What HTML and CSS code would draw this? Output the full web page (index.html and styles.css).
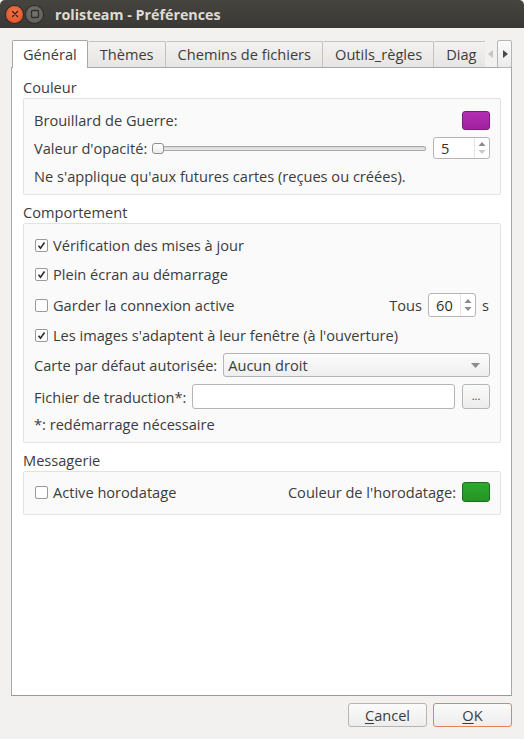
FILE: index.html
```html
<!DOCTYPE html>
<html lang="fr">
<head>
<meta charset="utf-8">
<title>rolisteam - Préférences</title>
<link rel="stylesheet" href="styles.css">
</head>
<body>
<div class="window">
  <div class="titlebar">
    <span class="wbtn close"><svg width="16" height="16" viewBox="0 0 16 16"><path d="M5.5 5.5l5 5M10.5 5.5l-5 5" stroke="#3a1a10" stroke-width="1.3" stroke-linecap="round"/></svg></span>
    <span class="wbtn mini"><svg width="16" height="16" viewBox="0 0 16 16"><rect x="4.5" y="4.5" width="7" height="7" rx="1" fill="none" stroke="#2e2d2a" stroke-width="1.3"/></svg></span>
    <span class="title">rolisteam - Préférences</span>
  </div>
  <div class="content">
    <div class="tabwidget">
      <div class="tabbar">
        <div class="tabs">
          <div class="tab active">Général</div>
          <div class="tab">Thèmes</div>
          <div class="tab">Chemins de fichiers</div>
          <div class="tab">Outils_règles</div>
          <div class="tab last">Diag</div>
        </div>
        <div class="scroll">
          <span class="sarrow left"><svg width="6" height="8" viewBox="0 0 6 8"><path d="M5 0L0 4l5 4z" fill="#c4c4c4"/></svg></span>
          <span class="sarrow right"><svg width="6" height="8" viewBox="0 0 6 8"><path d="M1 0l5 4-5 4z" fill="#4a4a4a"/></svg></span>
        </div>
      </div>
      <div class="pane">
        <div class="glabel">Couleur</div>
        <div class="group g1">
          <div class="row between">
            <span>Brouillard de Guerre:</span>
            <span class="swatch purple"></span>
          </div>
          <div class="row">
            <span>Valeur d'opacité:</span>
            <div class="slider"><span class="handle"></span><span class="groove"></span></div>
            <div class="spin s1"><span class="val">5</span><span class="arrows"><svg width="8" height="18" viewBox="0 0 8 18"><path d="M4 3l3.5 4h-7z" fill="#8a8a8a"/><path d="M4 15l3.5-4h-7z" fill="#c8c8c8"/></svg></span></div>
          </div>
          <div class="row">
            <span>Ne s'applique qu'aux futures cartes (reçues ou créées).</span>
          </div>
        </div>

        <div class="glabel">Comportement</div>
        <div class="group g2">
          <div class="row r1"><span class="check on"><svg width="9" height="9" viewBox="0 0 9 9"><path d="M1.5 4.8l2 2.4L7.5 1.5" fill="none" stroke="#2b2b2b" stroke-width="1.6"/></svg></span><span>Vérification des mises à jour</span></div>
          <div class="row r2"><span class="check on"><svg width="9" height="9" viewBox="0 0 9 9"><path d="M1.5 4.8l2 2.4L7.5 1.5" fill="none" stroke="#2b2b2b" stroke-width="1.6"/></svg></span><span>Plein écran au démarrage</span></div>
          <div class="row r3">
            <span class="check"></span><span class="grow">Garder la connexion active</span>
            <span class="tous">Tous</span>
            <div class="spin s2"><span class="val">60</span><span class="arrows"><svg width="8" height="20" viewBox="0 0 8 20"><path d="M4 4l3.5 4h-7z" fill="#8a8a8a"/><path d="M4 16l3.5-4h-7z" fill="#8a8a8a"/></svg></span></div>
            <span class="unit">s</span>
          </div>
          <div class="row r4"><span class="check on"><svg width="9" height="9" viewBox="0 0 9 9"><path d="M1.5 4.8l2 2.4L7.5 1.5" fill="none" stroke="#2b2b2b" stroke-width="1.6"/></svg></span><span>Les images s'adaptent à leur fenêtre (à l'ouverture)</span></div>
          <div class="row r5">
            <span>Carte par défaut autorisée:</span>
            <div class="combo"><span>Aucun droit</span><svg width="9" height="5" viewBox="0 0 9 5"><path d="M0 0h9L4.5 5z" fill="#8c8c8c"/></svg></div>
          </div>
          <div class="row r6">
            <span>Fichier de traduction*:</span>
            <div class="lineedit"></div>
            <div class="tbtn">...</div>
          </div>
          <div class="row r7"><span>*: redémarrage nécessaire</span></div>
        </div>

        <div class="glabel">Messagerie</div>
        <div class="group g3">
          <div class="row">
            <span class="check"></span><span class="grow">Active horodatage</span>
            <span class="clabel">Couleur de l'horodatage:</span>
            <span class="swatch green"></span>
          </div>
        </div>
      </div>
    </div>
    <div class="buttons">
      <div class="btn"><u>C</u>ancel</div>
      <div class="btn ok"><u>O</u>K</div>
    </div>
  </div>
</div>
</body>
</html>
```

FILE: styles.css
```css
* { box-sizing: border-box; }
html, body { margin: 0; padding: 0; }
body {
  width: 524px;
  height: 739px;
  background: #f2f1f0;
  font-family: "Open Sans", "DejaVu Sans", sans-serif;
  font-size: 14.6px;
  color: #3c3c3c;
  overflow: hidden;
}
.window { width: 524px; height: 739px; display: flex; flex-direction: column; }

.titlebar {
  height: 28px;
  background: linear-gradient(#45443f, #3a3935);
  display: flex;
  align-items: center;
  padding-left: 6px;
  border-radius: 5px 5px 0 0;
}
.wbtn {
  width: 17px; height: 17px; border-radius: 50%;
  display: flex; align-items: center; justify-content: center;
  margin-right: 3px;
}
.wbtn svg { display: block; }
.close { background: radial-gradient(circle at 50% 40%, #f5774a, #dc4a1e); box-shadow: 0 0 0 1px #2c2b28; }
.mini { background: radial-gradient(circle at 50% 40%, #76746d, #5b5a55); box-shadow: 0 0 0 1px #2c2b28; }
.title {
  margin-left: 9px;
  color: #dfdbd2;
  font-weight: bold;
  font-size: 14.3px;
}

.content { flex: 1; display: flex; flex-direction: column; padding: 12px 12px 0 11px; }

.tabwidget { display: flex; flex-direction: column; }
.tabbar { height: 27px; display: flex; align-items: flex-end; position: relative; z-index: 1; }
.tabs { width: 474px; display: flex; align-items: flex-end; overflow: hidden; height: 28px; margin-bottom: -1px; }
.tab {
  flex: none;
  height: 26px;
  padding: 0 11px 1px 12px;
  border: 1px solid #c2c2c2;
  border-bottom: none;
  border-left: none;
  background: linear-gradient(#f3f2f1, #e6e5e3);
  display: flex; align-items: center;
  white-space: nowrap;
  border-radius: 2px 2px 0 0;
  margin-bottom: 1px;
}
.tab.last { flex: 1; border-right: none; padding-right: 0; border-radius: 2px 0 0 0; }
.tab.active {
  height: 28px;
  margin-bottom: 0;
  background: #ffffff;
  border: 1px solid #a8a8a8;
  border-bottom: none;
  padding: 0 10px 1px 10px;
  margin-left: 1px;
}
.scroll { display: flex; height: 28px; align-items: stretch; margin-bottom: -1px; }
.sarrow { display: flex; align-items: center; justify-content: center; }
.sarrow.left { width: 12px; }
.sarrow.right { width: 15px; border: 1px solid #b5b5b5; background: linear-gradient(#fbfbfb, #ebebeb); border-radius: 2px; }

.pane {
  height: 629px;
  background: #ffffff;
  border: 1px solid #a8a8a8;
  border-bottom-color: #9a9a9a;
  padding: 10px 10px 0 11px;
  display: flex; flex-direction: column;
}
.glabel { height: 18px; line-height: 18px; margin-bottom: 2px; }
.group {
  background: #fafafa;
  border: 1px solid #e2e2e2;
  border-radius: 2px;
  padding: 10px 10px 7px 10px;
  margin-bottom: 8px;
  display: flex; flex-direction: column;
}
.g1 .row + .row { margin-top: 6px; }
.row { display: flex; align-items: center; height: 22px; white-space: nowrap; }
.between { justify-content: space-between; }
.grow { flex: 1; }

.swatch { width: 28px; height: 19px; border-radius: 3px; flex: none; }
.purple { background: linear-gradient(#b32db3, #a0229f); border: 1px solid #7a1a7a; }
.green { background: linear-gradient(#2ea82e, #249524); border: 1px solid #1b6e1b; height: 20px; }
.clabel { margin-right: 6px; }

.slider { flex: 1; display: flex; align-items: center; margin-left: 5px; margin-right: 7px; height: 12px; }
.handle { width: 12px; height: 11px; border: 1px solid #8e8e8e; border-radius: 3px; background: linear-gradient(#ffffff, #ececec); flex: none; }
.groove { flex: 1; height: 5px; border: 1px solid #a8a8a8; border-left: none; border-radius: 0 3px 3px 0; background: linear-gradient(#d6d6d6, #ececec); }

.spin {
  height: 22px;
  border: 1px solid #b5b5b5;
  border-radius: 3px;
  background: #fff;
  display: flex; align-items: center;
  flex: none;
}
.spin .val { flex: 1; padding-left: 7px; color: #2e2e2e; }
.spin .arrows { width: 15px; height: 100%; display: flex; align-items: center; justify-content: center; border-left: 1px solid #e6e6e6; }
.s1 { width: 57px; }
.s2 { width: 48px; height: 24px; }
.tous { margin-right: 6px; }
.unit { margin-left: 6px; margin-right: 1px; }

.g2 .r2 { margin-top: 7px; }
.g2 .r3 { margin-top: 8px; height: 24px; }
.g2 .r4 { margin-top: 7px; }
.g2 .r5 { margin-top: 7px; height: 24px; }
.g2 .r6 { margin-top: 7px; height: 25px; }
.g2 .r7 { margin-top: 4px; }

.check {
  width: 13px; height: 13px; flex: none;
  border: 1px solid #9a9a9a; border-radius: 2px;
  background: #ffffff;
  margin-left: 1px; margin-right: 5px;
  display: flex; align-items: center; justify-content: center;
}
.check svg { display: block; }

.combo {
  flex: 1; height: 24px; margin-left: 6px;
  border: 1px solid #b5b5b5; border-radius: 3px;
  background: linear-gradient(#fcfcfc, #eeeeee);
  display: flex; align-items: center; justify-content: space-between;
  padding: 0 9px 0 4px;
}
.lineedit { flex: 1; height: 25px; margin-left: 6px; border: 1px solid #b5b5b5; border-radius: 3px; background: #fff; }
.tbtn {
  width: 28px; height: 25px; margin-left: 7px; flex: none;
  border: 1px solid #b5b5b5; border-radius: 3px;
  background: linear-gradient(#fbfbfb, #ececec);
  display: flex; align-items: center; justify-content: center;
  font-size: 11px; padding-bottom: 3px;
}
.g3 { padding: 9px 10px 11px 10px; }

.buttons { display: flex; justify-content: flex-end; gap: 6px; margin-top: 7px; }
.btn {
  width: 79px; height: 24px;
  border: 1px solid #b5b5b5; border-radius: 3px;
  background: linear-gradient(#fbfbfb, #ededed);
  display: flex; align-items: center; justify-content: center;
}
.btn u { text-underline-offset: 2px; }
.btn.ok { border-color: #e38160; }
```
